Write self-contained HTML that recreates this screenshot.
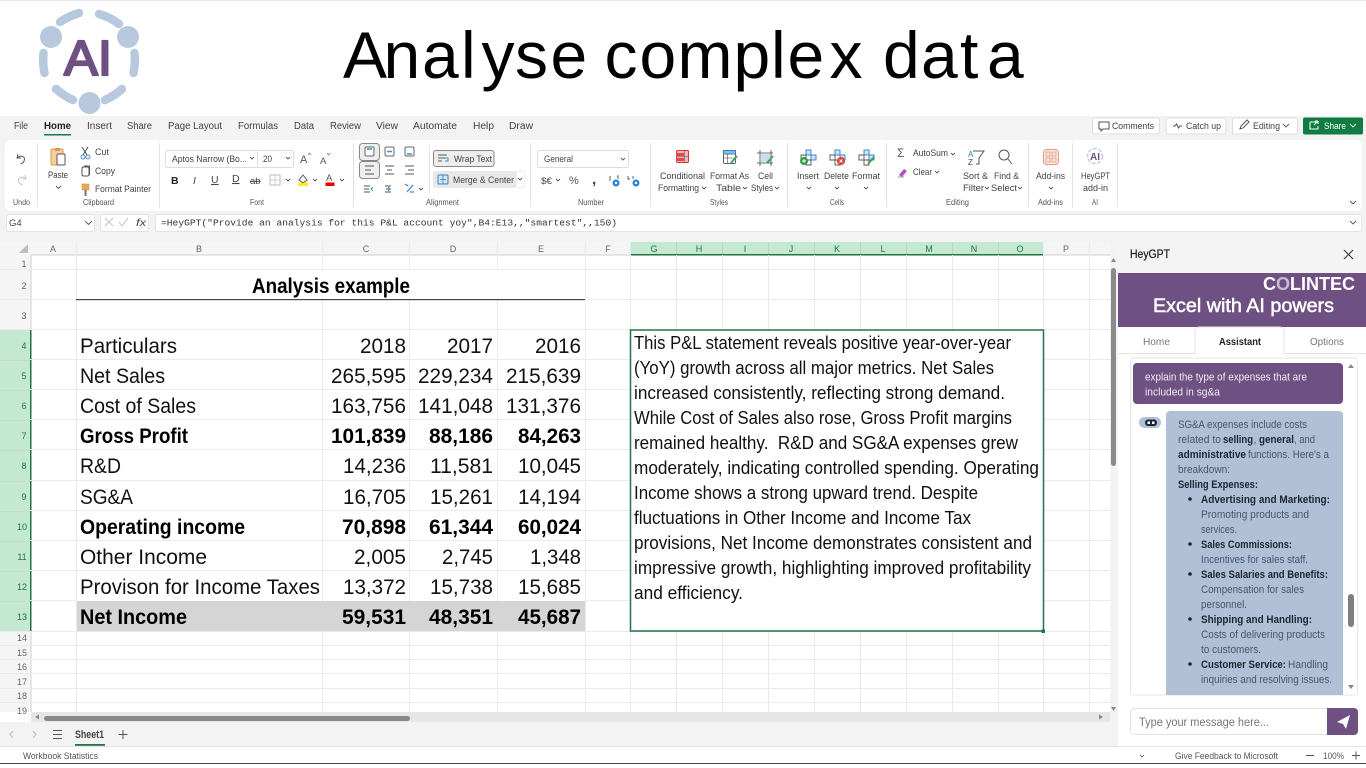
<!DOCTYPE html>
<html><head><meta charset="utf-8"><title>Analyse complex data</title>
<style>
html,body{margin:0;padding:0;background:#fff;width:1366px;height:768px;overflow:hidden}
svg{display:block;font-family:"Liberation Sans",sans-serif}
.r text{font-size:9.5px;fill:#424242}
.t text{font-size:10px;fill:#424242}
.l text{font-size:8.5px;fill:#555}
.h text{font-size:9px;fill:#666;text-anchor:middle}
.g{stroke:#ebebeb;stroke-width:1}
.d text{font-size:21px;fill:#111}
.db text{font-size:21px;fill:#000;font-weight:bold}
.n text{font-size:18.5px;fill:#111}
.m text{font-size:11px;fill:#48556a}
.mb text{font-size:11px;fill:#1d2530;font-weight:bold}
.i{fill:none;stroke:#555;stroke-width:1}
.c{fill:none;stroke:#555;stroke-width:.9}
</style></head><body>
<svg width="1366" height="768" viewBox="0 0 1366 768" xmlns="http://www.w3.org/2000/svg">
<rect width="1366" height="768" fill="#fff"/>
<rect width="1366" height="1" fill="#e3e8f0"/>
<!-- logo -->
<g stroke="#b8c9de" fill="none" stroke-linecap="round" stroke-width="8.500">
<path d="M60 22Q69 16 79 13"/><path d="M99 14Q110 17 119 24"/><path d="M43.500 53Q42.500 63 44.500 73"/><path d="M134.500 53Q135.500 63 133.500 73"/><path d="M56 89Q64 96 73 100"/><path d="M122 89Q114 96 105 100"/>
</g>
<g fill="#b8c9de"><circle cx="51" cy="37" r="11"/><circle cx="128" cy="37" r="11"/><circle cx="89.500" cy="103" r="11"/></g>
<text x="64" y="75" font-size="49" fill="#6f5082" stroke="#6f5082" stroke-width="2.200" stroke-linejoin="round" textLength="48" lengthAdjust="spacingAndGlyphs">AI</text>
<text x="343 383.500 422 461 481.500 515 550.500 596 604.500 639.500 677.500 733.500 771 787.500 829.500 870 883 921 960 987" y="78" font-size="66" fill="#000">Analyse complex data</text>

<!-- ribbon background -->
<rect y="116" width="1366" height="126" fill="#f3f3f3"/>
<g class="t">
<text x="14" y="129" textLength="14" lengthAdjust="spacingAndGlyphs">File</text>
<text x="44" y="129" textLength="27" lengthAdjust="spacingAndGlyphs" font-weight="bold" style="fill:#222">Home</text>
<text x="87" y="129" textLength="25" lengthAdjust="spacingAndGlyphs">Insert</text>
<text x="127" y="129" textLength="25" lengthAdjust="spacingAndGlyphs">Share</text>
<text x="168" y="129" textLength="54" lengthAdjust="spacingAndGlyphs">Page Layout</text>
<text x="238" y="129" textLength="40" lengthAdjust="spacingAndGlyphs">Formulas</text>
<text x="294" y="129" textLength="20" lengthAdjust="spacingAndGlyphs">Data</text>
<text x="330" y="129" textLength="31" lengthAdjust="spacingAndGlyphs">Review</text>
<text x="376" y="129" textLength="22" lengthAdjust="spacingAndGlyphs">View</text>
<text x="413" y="129" textLength="44" lengthAdjust="spacingAndGlyphs">Automate</text>
<text x="473" y="129" textLength="21" lengthAdjust="spacingAndGlyphs">Help</text>
<text x="509" y="129" textLength="24" lengthAdjust="spacingAndGlyphs">Draw</text>
</g>
<rect x="44" y="134" width="27" height="1.500" fill="#107c41"/>
<!-- top-right buttons -->
<g fill="#fff" stroke="#dcdcdc"><rect x="1092.500" y="118" width="67" height="16" rx="2"/><rect x="1166" y="118" width="60" height="16" rx="2"/><rect x="1232.500" y="118" width="65" height="16" rx="2"/></g>
<rect x="1303" y="117.500" width="60" height="17" rx="2" fill="#107c41"/>
<g class="r"><text x="1112" y="129" textLength="42" lengthAdjust="spacingAndGlyphs">Comments</text><text x="1186" y="129" textLength="35" lengthAdjust="spacingAndGlyphs">Catch up</text><text x="1253" y="129" textLength="27" lengthAdjust="spacingAndGlyphs">Editing</text></g>
<text x="1324" y="129" font-size="9.500" fill="#fff" textLength="22" lengthAdjust="spacingAndGlyphs">Share</text>
<path class="i" d="M1099 122h10v7h-6l-2 2v-2h-2z"/>
<path d="M1173 126h2l1.500-2 2 4 1.500-2h2" class="i"/>
<path class="i" d="M1240 129l1-3 6-6 2 2-6 6z"/>
<path class="c" d="M1283 124l3 3 3-3"/>
<path d="M1310 122h6M1310 122v7h8v-3M1314 125l4-4M1318 121h-3M1318 121v3" fill="none" stroke="#fff"/>
<path d="M1350 124l3 3 3-3" fill="none" stroke="#fff" stroke-width=".9"/>

<!-- ribbon card -->
<rect x="5" y="140" width="1357" height="71" rx="6" fill="#fff"/>
<g stroke="#e2e2e2"><path d="M37.500 143v64M159.500 143v64M353.500 143v64M530.500 143v64M650.500 143v64M787.500 143v64M886.500 143v64M1028.500 143v64M1072.500 143v64M1117.500 143v64"/></g>
<g class="l">
<text x="13" y="205" textLength="17" lengthAdjust="spacingAndGlyphs">Undo</text><text x="83" y="205" textLength="31" lengthAdjust="spacingAndGlyphs">Clipboard</text><text x="250" y="205" textLength="14" lengthAdjust="spacingAndGlyphs">Font</text>
<text x="426" y="205" textLength="33" lengthAdjust="spacingAndGlyphs">Alignment</text><text x="578" y="205" textLength="26" lengthAdjust="spacingAndGlyphs">Number</text><text x="710" y="205" textLength="18" lengthAdjust="spacingAndGlyphs">Styles</text>
<text x="830" y="205" textLength="14" lengthAdjust="spacingAndGlyphs">Cells</text><text x="946" y="205" textLength="23" lengthAdjust="spacingAndGlyphs">Editing</text><text x="1038" y="205" textLength="25" lengthAdjust="spacingAndGlyphs">Add-ins</text><text x="1092" y="205" textLength="6" lengthAdjust="spacingAndGlyphs">AI</text>
</g>
<!-- undo / redo -->
<path d="M18 154l-1 4 4 0M17.500 158c2-3 7-2 7 1 0 3-2 4-4 5" fill="none" stroke="#555"/>
<path d="M25 175l1 4-4 0M25.500 179c-2-3-7-2-7 1 0 3 2 4 4 5" fill="none" stroke="#c4c4c4"/>
<!-- clipboard -->
<rect x="51" y="149" width="12" height="16" rx="1" fill="#f6cf9f" stroke="#d99a4e"/>
<rect x="55" y="148" width="5" height="3" fill="#d99a4e"/>
<rect x="57" y="154" width="8" height="11" rx="1" fill="#fff" stroke="#555"/>
<g class="r"><text x="48" y="178" textLength="20" lengthAdjust="spacingAndGlyphs">Paste</text><text x="95" y="155" textLength="14" lengthAdjust="spacingAndGlyphs">Cut</text><text x="95" y="174" textLength="20" lengthAdjust="spacingAndGlyphs">Copy</text><text x="95" y="192" textLength="56" lengthAdjust="spacingAndGlyphs">Format Painter</text></g>
<path class="c" d="M56 186l2.500 2.500 2.500-2.500"/>
<path d="M82 147l5 8M88 147l-5 8" stroke="#555" fill="none"/><circle cx="83" cy="157" r="2" fill="none" stroke="#4a90d0"/><circle cx="88" cy="157" r="2" fill="none" stroke="#4a90d0"/>
<rect x="82" y="167" width="7" height="9" rx="1.500" class="i"/><path class="i" d="M84 166h5.500v9"/>
<rect x="82" y="184" width="7" height="6" fill="#eaa855" stroke="#c98a3a" stroke-width=".5"/><path d="M85.500 190v6" stroke="#777" stroke-width="2"/>
<!-- font -->
<rect x="165.500" y="150.500" width="128" height="17" rx="2" fill="#fff" stroke="#dedede"/>
<path d="M257.500 151v16" stroke="#dedede"/>
<g class="r"><text x="172" y="162" textLength="75" lengthAdjust="spacingAndGlyphs">Aptos Narrow (Bo...</text><text x="263" y="162" textLength="9" lengthAdjust="spacingAndGlyphs">20</text></g>
<path class="c" d="M250 157l2 2 2-2M286 157l2 2 2-2"/>
<text x="300" y="163" font-size="11" fill="#555">A</text><path d="M308 155l1.500-2 1.500 2" fill="none" stroke="#3a8fd0" stroke-width=".8"/>
<text x="320" y="164" font-size="9.500" fill="#555">A</text><path d="M327 153l1.500 2 1.500-2" fill="none" stroke="#3a8fd0" stroke-width=".8"/>
<g font-size="10.500" fill="#444">
<text x="171" y="184" font-weight="bold" fill="#222">B</text>
<text x="193" y="184" font-style="italic">I</text>
<text x="211" y="183" text-decoration="underline">U</text>
<text x="232" y="182" text-decoration="underline">D</text>
<text x="250" y="184" font-size="9.500" text-decoration="line-through">ab</text>
</g>
<rect x="270" y="175" width="10" height="10" fill="none" stroke="#bbb"/><path d="M275 175v10M270 180h10" stroke="#ccc"/>
<path class="c" d="M286 179l2 2 2-2M313 179l2 2 2-2M340 179l2 2 2-2"/>
<path d="M299 180l4-5 4 5-4 3z" fill="none" stroke="#555"/><rect x="298" y="183" width="10" height="3" fill="#ffef00"/>
<text x="326" y="181" font-size="9.500" fill="#555">A</text><rect x="325.500" y="182.500" width="9" height="3.500" fill="#e60000"/>
<!-- alignment -->
<rect x="359.500" y="143.500" width="20" height="17" rx="3" fill="#eee" stroke="#888"/>
<rect x="359.500" y="161.500" width="20" height="17" rx="3" fill="#eee" stroke="#888"/>
<g fill="#fff" stroke="#666"><rect x="365" y="147" width="9" height="9" rx="1.500"/><rect x="385" y="147" width="9" height="9" rx="1.500"/><rect x="405" y="147" width="9" height="9" rx="1.500"/></g>
<path d="M367 149h5M387 151.500h5M407 154h5" stroke="#3a8fd0" stroke-width="1.500"/>
<path class="i" d="M365 166h9M365 170h6M365 174h9M385 166h9M387 170h5M385 174h9M405 166h9M408 170h6M405 174h9"/>
<path class="i" d="M364 186h6M364 189h5M364 192h6M385 186h6M386 189h5M385 192h6M405 184l3 2"/>
<path d="M373 187l-2 2 2 2M388 187l2 2-2 2" fill="none" stroke="#3a8fd0"/>
<path d="M407 192l6-7M410 192h4" stroke="#3a8fd0" fill="none" stroke-width="1.300"/>
<path class="c" d="M419 188l2 2 2-2"/>
<path d="M429.500 145v48" stroke="#e2e2e2"/>
<rect x="433.500" y="150.500" width="60.500" height="16" rx="2.500" fill="#eee" stroke="#888"/>
<rect x="433" y="171" width="83" height="17" rx="2" fill="#e8e8e8"/><rect x="516.500" y="171.500" width="8" height="16" fill="#fff" stroke="#eee"/>
<path class="i" d="M438 155h9M438 158h7M438 161h4"/><path d="M445 158h3v3h-3" fill="none" stroke="#3a8fd0"/>
<rect x="438" y="175" width="10" height="9" rx="1" fill="#d5e6f5" stroke="#3a7fb8"/><path d="M443 175v9M440 179.500h6" stroke="#3a7fb8" stroke-width=".8"/>
<g class="r"><text x="454" y="162" textLength="38" lengthAdjust="spacingAndGlyphs">Wrap Text</text><text x="453" y="183" textLength="61" lengthAdjust="spacingAndGlyphs">Merge &amp; Center</text></g>
<path class="c" d="M518 178l2 2 2-2"/>
<!-- number -->
<rect x="537.500" y="150.500" width="91" height="17" rx="2" fill="#fff" stroke="#dedede"/>
<g class="r"><text x="544" y="162" textLength="29" lengthAdjust="spacingAndGlyphs">General</text></g>
<path class="c" d="M621 158l2 2 2-2M556 179l2 2 2-2"/>
<text x="541" y="184" font-size="9.500" fill="#444" textLength="11" lengthAdjust="spacingAndGlyphs">$€</text>
<text x="569" y="184" font-size="11" fill="#555">%</text>
<text x="592" y="184" font-size="15" font-weight="bold" fill="#444">,</text>
<path class="c" d="M610 176v5M617 176h1v3M628 176v3h2M633 176v3"/>
<circle cx="616" cy="183" r="3.500" fill="#2a86d0"/><circle cx="636" cy="183" r="3.500" fill="#2a86d0"/>
<circle cx="616" cy="183" r="1.200" fill="#fff"/><circle cx="636" cy="183" r="1.200" fill="#fff"/>
<!-- styles -->
<rect x="676.500" y="150.500" width="12" height="12" rx="1" fill="#f6b8b8" stroke="#d33"/><rect x="676" y="153" width="8" height="3" fill="#e84545"/><rect x="676" y="158" width="8" height="3" fill="#e84545"/>
<path d="M684.500 151v11M677 156.500h11" stroke="#777" stroke-width=".8"/>
<rect x="723.500" y="150.500" width="12" height="13" rx="1" fill="#fff" stroke="#666"/><rect x="723.500" y="150.500" width="12" height="3.500" fill="#8cbbe3" stroke="#3a7fb8"/>
<path d="M727.500 154v9M723.500 158h10" stroke="#777" stroke-width=".8"/><path d="M731 163l6-7" stroke="#3fa34d" stroke-width="2"/>
<path d="M760 150v16M771 150v16M757 153h16M757 163h16" fill="none" stroke="#444" stroke-width=".8"/><rect x="761" y="154" width="9" height="8" fill="#c9e0f4"/><path d="M767 163l6-7" stroke="#3fa34d" stroke-width="2"/>
<g class="r">
<text x="660" y="179" textLength="45" lengthAdjust="spacingAndGlyphs">Conditional</text><text x="658" y="191" textLength="41" lengthAdjust="spacingAndGlyphs">Formatting</text>
<text x="710" y="179" textLength="39" lengthAdjust="spacingAndGlyphs">Format As</text><text x="716" y="191" textLength="25" lengthAdjust="spacingAndGlyphs">Table</text>
<text x="758" y="179" textLength="15" lengthAdjust="spacingAndGlyphs">Cell</text><text x="751" y="191" textLength="22" lengthAdjust="spacingAndGlyphs">Styles</text>
<text x="797" y="179" textLength="22" lengthAdjust="spacingAndGlyphs">Insert</text><text x="824" y="179" textLength="25" lengthAdjust="spacingAndGlyphs">Delete</text><text x="852" y="179" textLength="28" lengthAdjust="spacingAndGlyphs">Format</text>
</g>
<path class="c" d="M702 187l2 2 2-2M743 187l2 2 2-2M775 187l2 2 2-2M807 187l2 2 2-2M835 187l2 2 2-2M864 187l2 2 2-2"/>
<!-- cells icons -->
<g fill="#cfe3f5" stroke="#2a80c8" stroke-width=".9"><rect x="806" y="150" width="5" height="5"/><rect x="811" y="155" width="5" height="5"/><rect x="835" y="150" width="5" height="5"/><rect x="840" y="155" width="5" height="5"/><rect x="864" y="150" width="5" height="5"/><rect x="869" y="155" width="5" height="5"/></g>
<g fill="none" stroke="#555" stroke-width=".9"><path d="M806 155h-5v5h5v5h5v-5h-5z"/><path d="M835 155h-5v5h5v5h5v-5h-5z"/><path d="M864 155h-5v5h5v5h5v-5h-5z"/></g>
<circle cx="804" cy="161" r="4" fill="#2f9e44"/><path d="M802 161h4M804 159v4" stroke="#fff"/>
<circle cx="841" cy="161" r="4" fill="#e53935"/><path d="M839.500 159.500l3 3M842.500 159.500l-3 3" stroke="#fff"/>
<path d="M868 164l6-7" stroke="#3fa34d" stroke-width="2"/>
<!-- editing -->
<text x="897" y="157" font-size="12" fill="#555">Σ</text>
<g class="r"><text x="913" y="156" textLength="35" lengthAdjust="spacingAndGlyphs">AutoSum</text><text x="913" y="175" textLength="19" lengthAdjust="spacingAndGlyphs">Clear</text>
<text x="963" y="179" textLength="25" lengthAdjust="spacingAndGlyphs">Sort &amp;</text><text x="963" y="191" textLength="21" lengthAdjust="spacingAndGlyphs">Filter</text><text x="994" y="179" textLength="25" lengthAdjust="spacingAndGlyphs">Find &amp;</text><text x="991" y="191" textLength="26" lengthAdjust="spacingAndGlyphs">Select</text>
<text x="1036" y="179" textLength="29" lengthAdjust="spacingAndGlyphs">Add-ins</text><text x="1081" y="179" textLength="29" lengthAdjust="spacingAndGlyphs">HeyGPT</text><text x="1083" y="191" textLength="25" lengthAdjust="spacingAndGlyphs">add-in</text></g>
<path class="c" d="M951 153l2 2 2-2M935 171l2 2 2-2M985 187l2 2 2-2M1018 187l2 2 2-2M1049 187l2 2 2-2"/>
<path d="M899 175l5-6 3 2-5 6z" fill="#b04fc0"/><path d="M898 177h6" stroke="#999"/>
<text x="968" y="157" font-size="8" fill="#2a80c8">A</text><text x="968" y="165" font-size="8" fill="#444">Z</text><path class="i" d="M973 151h11l-5 7v6h-3"/>
<circle cx="1004" cy="155" r="5" class="i"/><path class="i" d="M1008 159l4 5"/>
<rect x="1043.500" y="149.500" width="15" height="15" rx="3" fill="#fdece6" stroke="#e89a80"/>
<g fill="none" stroke="#e89a80" stroke-width=".9"><rect x="1046" y="152" width="4" height="4"/><rect x="1052" y="152" width="4" height="4"/><rect x="1046" y="158" width="4" height="4"/><rect x="1052" y="158" width="4" height="4"/></g>
<circle cx="1095" cy="156" r="7.500" fill="none" stroke="#c3d0e2" stroke-width="1.500" stroke-dasharray="4 1.500"/>
<text x="1090" y="160" font-size="10" font-weight="bold" fill="#6f5082">AI</text>
<path class="c" d="M1350 201l3 3 3-3"/>

<!-- formula bar -->
<g fill="#fff" stroke="#e3e3e3"><rect x="6.500" y="214.500" width="88" height="17" rx="2"/><rect x="100.500" y="214.500" width="48" height="17" rx="2"/><rect x="155.500" y="214.500" width="1206" height="17" rx="2"/></g>
<text x="9" y="226" font-size="9.500" fill="#444">G4</text>
<path class="c" d="M85 221l3.500 3.500 3.500-3.500M1350 221l3 3 3-3"/>
<path d="M105 218l8 8M113 218l-8 8M119 222l3 4 6-8" fill="none" stroke="#c4c4c4"/>
<text x="136" y="226" font-size="10" font-style="italic" fill="#444" textLength="10" lengthAdjust="spacingAndGlyphs">fx</text>
<text x="161" y="225.500" font-family="Liberation Mono,monospace" font-size="9.500" fill="#333" textLength="456" lengthAdjust="spacingAndGlyphs">=HeyGPT("Provide an analysis for this P&amp;L account yoy",B4:E13,,"smartest",,150)</text>

<!-- sheet -->
<rect x="0" y="242" width="1118" height="504" fill="#fff"/>
<rect x="0" y="242" width="1110" height="13" fill="#f5f5f5"/>
<rect x="0" y="255" width="31" height="457" fill="#f5f5f5"/>
<rect x="630" y="242" width="413" height="12" fill="#c5e8d3"/>
<rect x="630" y="254" width="413" height="1.500" fill="#217346"/>
<rect x="0" y="330" width="30" height="301" fill="#c5e8d3"/>
<rect x="30" y="330" width="1.500" height="301" fill="#217346"/>
<rect x="31" y="254.500" width="599" height="1" fill="#cfcfcf"/><rect x="1043" y="254.500" width="67" height="1" fill="#cfcfcf"/>
<rect x="30.500" y="255" width="1" height="75" fill="#cfcfcf"/><rect x="30.500" y="631" width="1" height="81" fill="#cfcfcf"/>
<path d="M28 244v9h-9z" fill="#bdbdbd"/>
<rect x="76" y="601" width="509" height="30" fill="#d5d5d5"/>
<g class="g">
<path d="M0 269.500H1110M0 299.500H76M585 299.500H1110M0 329.500H630M1043 329.500H1110M0 359.500H630M1043 359.500H1110M0 389.500H630M1043 389.500H1110M0 419.500H630M1043 419.500H1110M0 449.500H630M1043 449.500H1110M0 480.500H630M1043 480.500H1110M0 510.500H630M1043 510.500H1110M0 540.500H630M1043 540.500H1110M0 570.500H630M1043 570.500H1110M0 600.500H76M585 600.500H630M1043 600.500H1110M0 631.500H1110M0 645.500H1110M0 659.500H1110M0 673.500H1110M0 688.500H1110M0 702.500H1110" fill="none"/>
<path d="M76.500 242V712M322.500 242V269M322.500 300V601M322.500 631V712M409.500 242V269M409.500 300V601M409.500 631V712M497.500 242V269M497.500 300V601M497.500 631V712M585.500 242V712M630.500 242V330M630.500 631V712M676.500 255V330M676.500 631V712M722.500 255V330M722.500 631V712M768.500 255V330M768.500 631V712M814.500 255V330M814.500 631V712M860.500 255V330M860.500 631V712M906.500 255V330M906.500 631V712M952.500 255V330M952.500 631V712M998.500 255V330M998.500 631V712M1043.500 242V712M1089.500 242V712" fill="none"/>
</g>
<path d="M676.500 242v12M722.500 242v12M768.500 242v12M814.500 242v12M860.500 242v12M906.500 242v12M952.500 242v12M998.500 242v12M0 360h30M0 390h30M0 420h30M0 450h30M0 481h30M0 511h30M0 541h30M0 571h30M0 601h30" stroke="#aedcc0"/>
<g class="h">
<text x="53" y="252">A</text><text x="199" y="252">B</text><text x="366" y="252">C</text><text x="453" y="252">D</text><text x="541" y="252">E</text><text x="608" y="252">F</text>
<text x="654" y="252" style="fill:#217346">G</text><text x="699" y="252" style="fill:#217346">H</text><text x="745" y="252" style="fill:#217346">I</text><text x="791" y="252" style="fill:#217346">J</text><text x="837" y="252" style="fill:#217346">K</text><text x="883" y="252" style="fill:#217346">L</text><text x="929" y="252" style="fill:#217346">M</text><text x="974" y="252" style="fill:#217346">N</text><text x="1020" y="252" style="fill:#217346">O</text><text x="1066" y="252">P</text>
<text x="24" y="267">1</text><text x="24" y="289">2</text><text x="24" y="319">3</text>
<text x="24" y="349" style="fill:#217346">4</text><text x="24" y="379" style="fill:#217346">5</text><text x="24" y="409" style="fill:#217346">6</text><text x="24" y="439" style="fill:#217346">7</text><text x="24" y="469" style="fill:#217346">8</text><text x="24" y="500" style="fill:#217346">9</text><text x="22" y="530" style="fill:#217346">10</text><text x="22" y="560" style="fill:#217346">11</text><text x="22" y="590" style="fill:#217346">12</text><text x="22" y="620" style="fill:#217346">13</text>
<text x="22" y="641">14</text><text x="22" y="656">15</text><text x="22" y="670">16</text><text x="22" y="685">17</text><text x="22" y="699">18</text><text x="22" y="714">19</text>
</g>
<!-- table -->
<text x="252" y="293" font-size="21" font-weight="bold" fill="#000" textLength="158" lengthAdjust="spacingAndGlyphs">Analysis example</text>
<rect x="76" y="299" width="509" height="1.200" fill="#444"/>
<g class="d">
<text x="80" y="353" textLength="97" lengthAdjust="spacingAndGlyphs">Particulars</text>
<text x="360" y="353" textLength="46" lengthAdjust="spacingAndGlyphs">2018</text><text x="447" y="353" textLength="46" lengthAdjust="spacingAndGlyphs">2017</text><text x="535" y="353" textLength="46" lengthAdjust="spacingAndGlyphs">2016</text>
<text x="80" y="383" textLength="85" lengthAdjust="spacingAndGlyphs">Net Sales</text>
<text x="331" y="383" textLength="75" lengthAdjust="spacingAndGlyphs">265,595</text><text x="418" y="383" textLength="75" lengthAdjust="spacingAndGlyphs">229,234</text><text x="506" y="383" textLength="75" lengthAdjust="spacingAndGlyphs">215,639</text>
<text x="80" y="413" textLength="116" lengthAdjust="spacingAndGlyphs">Cost of Sales</text>
<text x="331" y="413" textLength="75" lengthAdjust="spacingAndGlyphs">163,756</text><text x="418" y="413" textLength="75" lengthAdjust="spacingAndGlyphs">141,048</text><text x="506" y="413" textLength="75" lengthAdjust="spacingAndGlyphs">131,376</text>
<text x="80" y="473" textLength="41" lengthAdjust="spacingAndGlyphs">R&amp;D</text>
<text x="343" y="473" textLength="63" lengthAdjust="spacingAndGlyphs">14,236</text><text x="430" y="473" textLength="63" lengthAdjust="spacingAndGlyphs">11,581</text><text x="518" y="473" textLength="63" lengthAdjust="spacingAndGlyphs">10,045</text>
<text x="80" y="504" textLength="53" lengthAdjust="spacingAndGlyphs">SG&amp;A</text>
<text x="343" y="504" textLength="63" lengthAdjust="spacingAndGlyphs">16,705</text><text x="430" y="504" textLength="63" lengthAdjust="spacingAndGlyphs">15,261</text><text x="518" y="504" textLength="63" lengthAdjust="spacingAndGlyphs">14,194</text>
<text x="80" y="564" textLength="127" lengthAdjust="spacingAndGlyphs">Other Income</text>
<text x="354" y="564" textLength="52" lengthAdjust="spacingAndGlyphs">2,005</text><text x="442" y="564" textLength="51" lengthAdjust="spacingAndGlyphs">2,745</text><text x="530" y="564" textLength="51" lengthAdjust="spacingAndGlyphs">1,348</text>
<text x="80" y="594" textLength="240" lengthAdjust="spacingAndGlyphs">Provison for Income Taxes</text>
<text x="343" y="594" textLength="63" lengthAdjust="spacingAndGlyphs">13,372</text><text x="430" y="594" textLength="63" lengthAdjust="spacingAndGlyphs">15,738</text><text x="518" y="594" textLength="63" lengthAdjust="spacingAndGlyphs">15,685</text>
</g>
<g class="db">
<text x="80" y="443" textLength="108" lengthAdjust="spacingAndGlyphs">Gross Profit</text>
<text x="331" y="443" textLength="75" lengthAdjust="spacingAndGlyphs">101,839</text><text x="429" y="443" textLength="64" lengthAdjust="spacingAndGlyphs">88,186</text><text x="518" y="443" textLength="63" lengthAdjust="spacingAndGlyphs">84,263</text>
<text x="80" y="534" textLength="165" lengthAdjust="spacingAndGlyphs">Operating income</text>
<text x="342" y="534" textLength="64" lengthAdjust="spacingAndGlyphs">70,898</text><text x="429" y="534" textLength="64" lengthAdjust="spacingAndGlyphs">61,344</text><text x="518" y="534" textLength="63" lengthAdjust="spacingAndGlyphs">60,024</text>
<text x="80" y="624" textLength="107" lengthAdjust="spacingAndGlyphs">Net Income</text>
<text x="342" y="624" textLength="64" lengthAdjust="spacingAndGlyphs">59,531</text><text x="429" y="624" textLength="64" lengthAdjust="spacingAndGlyphs">48,351</text><text x="518" y="624" textLength="63" lengthAdjust="spacingAndGlyphs">45,687</text>
</g>
<!-- analysis cell -->
<rect x="630.500" y="330" width="413" height="301" fill="#fff" stroke="#217346" stroke-width="1.500"/>
<rect x="1041.500" y="629.500" width="3.500" height="3.500" fill="#217346"/>
<g class="n">
<text x="634" y="349" textLength="377" lengthAdjust="spacingAndGlyphs">This P&amp;L statement reveals positive year-over-year</text>
<text x="634" y="374" textLength="360" lengthAdjust="spacingAndGlyphs">(YoY) growth across all major metrics. Net Sales</text>
<text x="634" y="399" textLength="371" lengthAdjust="spacingAndGlyphs">increased consistently, reflecting strong demand.</text>
<text x="634" y="424" textLength="378" lengthAdjust="spacingAndGlyphs">While Cost of Sales also rose, Gross Profit margins</text>
<text x="634" y="449" textLength="384" lengthAdjust="spacingAndGlyphs" xml:space="preserve">remained healthy.  R&amp;D and SG&amp;A expenses grew</text>
<text x="634" y="474" textLength="405" lengthAdjust="spacingAndGlyphs">moderately, indicating controlled spending. Operating</text>
<text x="634" y="499" textLength="344" lengthAdjust="spacingAndGlyphs">Income shows a strong upward trend. Despite</text>
<text x="634" y="524" textLength="337" lengthAdjust="spacingAndGlyphs">fluctuations in Other Income and Income Tax</text>
<text x="634" y="549" textLength="398" lengthAdjust="spacingAndGlyphs">provisions, Net Income demonstrates consistent and</text>
<text x="634" y="574" textLength="397" lengthAdjust="spacingAndGlyphs">impressive growth, highlighting improved profitability</text>
<text x="634" y="599" textLength="109" lengthAdjust="spacingAndGlyphs">and efficiency.</text>
</g>
<!-- sheet scrollbars -->
<rect x="1110" y="242" width="8" height="504" fill="#f3f3f3"/>
<rect x="1111" y="268" width="5" height="198" rx="2.500" fill="#8a8a8a"/>
<path d="M1111 262l2.500-4 2.500 4zM1111 707l2.500 4 2.500-4z" fill="#888"/>
<rect x="31" y="712" width="1079" height="10" fill="#e6e6e6"/>
<rect x="44" y="716" width="366" height="5" rx="2.500" fill="#8a8a8a"/>
<path d="M39 714.500v5l-4-2.500zM1099 714.500v5l4-2.500z" fill="#888"/>
<rect x="0" y="722" width="1118" height="24" fill="#f3f3f3"/>
<path d="M13 731l-3 3.500 3 3.500M33 731l3 3.500-3 3.500" fill="none" stroke="#bbb"/>
<path d="M53 730.500h9M53 734.500h9M53 738.500h9" stroke="#555"/>
<text x="75" y="738" font-size="11" font-weight="bold" fill="#444" textLength="29" lengthAdjust="spacingAndGlyphs">Sheet1</text>
<rect x="75" y="744" width="30" height="1.800" fill="#217346"/>
<path d="M123 730v9M118.500 734.500h9" stroke="#555"/>
<!-- status -->
<rect x="0" y="746" width="1366" height="17" fill="#fff"/><rect x="0" y="746" width="1366" height=".8" fill="#ddd"/>
<rect x="0" y="763" width="1366" height="1" fill="#444"/>
<g class="l"><text x="23" y="759" textLength="75" lengthAdjust="spacingAndGlyphs" style="font-size:9px">Workbook Statistics</text><text x="1175" y="759" textLength="103" lengthAdjust="spacingAndGlyphs" style="font-size:9px">Give Feedback to Microsoft</text><text x="1323" y="759" textLength="21" lengthAdjust="spacingAndGlyphs" style="font-size:9px">100%</text></g>
<path d="M1140 755l2 2 2-2" fill="none" stroke="#555" stroke-width=".8"/>
<path d="M1306 755.500h8M1352 755.500h8M1356 751.500v8" stroke="#555"/>

<!-- pane -->
<rect x="1118" y="242" width="248" height="504" fill="#fff"/>
<rect x="1118" y="242" width="248" height="31" fill="#f4f4f4"/>
<text x="1130" y="258" font-size="11.500" fill="#222" stroke="#222" stroke-width=".25" textLength="40" lengthAdjust="spacingAndGlyphs">HeyGPT</text>
<path d="M1344 250l9 9M1353 250l-9 9" stroke="#444" stroke-width="1.200"/>
<rect x="1118" y="273" width="248" height="54" fill="#6f5082"/>
<text x="1263" y="290" font-size="18" font-weight="bold" fill="#fff" textLength="92" lengthAdjust="spacingAndGlyphs">C<tspan fill="#c9bcd2">O</tspan>LINTEC</text>
<text x="1153" y="312" font-size="19" fill="#fff" stroke="#fff" stroke-width=".5" textLength="181" lengthAdjust="spacingAndGlyphs">Excel with AI powers</text>
<path d="M1118 353.500H1195V331a4 4 0 0 1 4-4H1280a4 4 0 0 1 4 4V353.500H1366" fill="none" stroke="#e3e3e3"/>
<text x="1143" y="345" font-size="10" fill="#777" textLength="27" lengthAdjust="spacingAndGlyphs">Home</text>
<text x="1219" y="345" font-size="10" font-weight="bold" fill="#222" textLength="42" lengthAdjust="spacingAndGlyphs">Assistant</text>
<text x="1310" y="345" font-size="10" fill="#777" textLength="34" lengthAdjust="spacingAndGlyphs">Options</text>
<rect x="1130.500" y="358" width="227" height="337" rx="3" fill="#fff" stroke="#e6e6e6"/>
<rect x="1133" y="363" width="210" height="41" rx="4" fill="#6f5082"/>
<text x="1145" y="380.500" font-size="11" fill="#f1ecf4" textLength="162" lengthAdjust="spacingAndGlyphs">explain the type of expenses that are</text>
<text x="1145" y="395.500" font-size="11" fill="#f1ecf4" textLength="75" lengthAdjust="spacingAndGlyphs">included in sg&amp;a</text>
<path d="M1166 695V415a4 4 0 0 1 4-4h169a4 4 0 0 1 4 4V695z" fill="#b0c0d6"/>
<rect x="1139" y="417" width="22" height="11" rx="5.500" fill="#b0c0d6"/>
<rect x="1145" y="419.500" width="12" height="6.500" rx="3" fill="#1f2530"/><rect x="1147.500" y="421.500" width="2.500" height="2.500" fill="#fff"/><rect x="1152" y="421.500" width="2.500" height="2.500" fill="#fff"/>
<g class="m">
<text x="1178" y="428" textLength="129" lengthAdjust="spacingAndGlyphs">SG&amp;A expenses include costs</text>
<text x="1178" y="443" textLength="43" lengthAdjust="spacingAndGlyphs">related to</text>
<text x="1294" y="443" textLength="21" lengthAdjust="spacingAndGlyphs">, and</text>
<text x="1253.500" y="443">,</text>
<text x="1248" y="458" textLength="81" lengthAdjust="spacingAndGlyphs">functions. Here's a</text>
<text x="1178" y="473" textLength="52" lengthAdjust="spacingAndGlyphs">breakdown:</text>
<text x="1201" y="518" textLength="108" lengthAdjust="spacingAndGlyphs">Promoting products and</text>
<text x="1201" y="533" textLength="36" lengthAdjust="spacingAndGlyphs">services.</text>
<text x="1201" y="563" textLength="107" lengthAdjust="spacingAndGlyphs">Incentives for sales staff.</text>
<text x="1201" y="593" textLength="103" lengthAdjust="spacingAndGlyphs">Compensation for sales</text>
<text x="1201" y="608" textLength="46" lengthAdjust="spacingAndGlyphs">personnel.</text>
<text x="1201" y="638" textLength="124" lengthAdjust="spacingAndGlyphs">Costs of delivering products</text>
<text x="1201" y="653" textLength="60" lengthAdjust="spacingAndGlyphs">to customers.</text>
<text x="1288" y="668" textLength="40" lengthAdjust="spacingAndGlyphs">Handling</text>
<text x="1201" y="683" textLength="131" lengthAdjust="spacingAndGlyphs">inquiries and resolving issues.</text>
</g>
<g class="mb">
<text x="1223" y="443" textLength="30" lengthAdjust="spacingAndGlyphs">selling</text>
<text x="1259" y="443" textLength="35" lengthAdjust="spacingAndGlyphs">general</text>
<text x="1178" y="458" textLength="68" lengthAdjust="spacingAndGlyphs">administrative</text>
<text x="1178" y="488" textLength="80" lengthAdjust="spacingAndGlyphs">Selling Expenses:</text>
<text x="1201" y="503" textLength="129" lengthAdjust="spacingAndGlyphs">Advertising and Marketing:</text>
<text x="1201" y="548" textLength="91" lengthAdjust="spacingAndGlyphs">Sales Commissions:</text>
<text x="1201" y="578" textLength="127" lengthAdjust="spacingAndGlyphs">Sales Salaries and Benefits:</text>
<text x="1201" y="623" textLength="111" lengthAdjust="spacingAndGlyphs">Shipping and Handling:</text>
<text x="1201" y="668" textLength="85" lengthAdjust="spacingAndGlyphs">Customer Service:</text>
</g>
<g fill="#1d2530"><circle cx="1190" cy="499" r="1.800"/><circle cx="1190" cy="544" r="1.800"/><circle cx="1190" cy="574" r="1.800"/><circle cx="1190" cy="619" r="1.800"/><circle cx="1190" cy="664" r="1.800"/></g>
<rect x="1348" y="594" width="6" height="33" rx="3" fill="#7f7f7f"/>
<path d="M1348 368l3-4 3 4zM1348 685l3 4 3-4z" fill="#888"/>
<rect x="1130.500" y="708.500" width="227" height="26" rx="4" fill="#fff" stroke="#e3e3e3"/>
<path d="M1327 708h27a4 4 0 0 1 4 4v19a4 4 0 0 1-4 4h-27z" fill="#6f5082"/>
<text x="1139" y="726" font-size="11.500" fill="#777" textLength="130" lengthAdjust="spacingAndGlyphs">Type your message here...</text>
<path d="M1337 722l13-7-4 14-3-5z" fill="#fff"/>
</svg>
</body></html>
